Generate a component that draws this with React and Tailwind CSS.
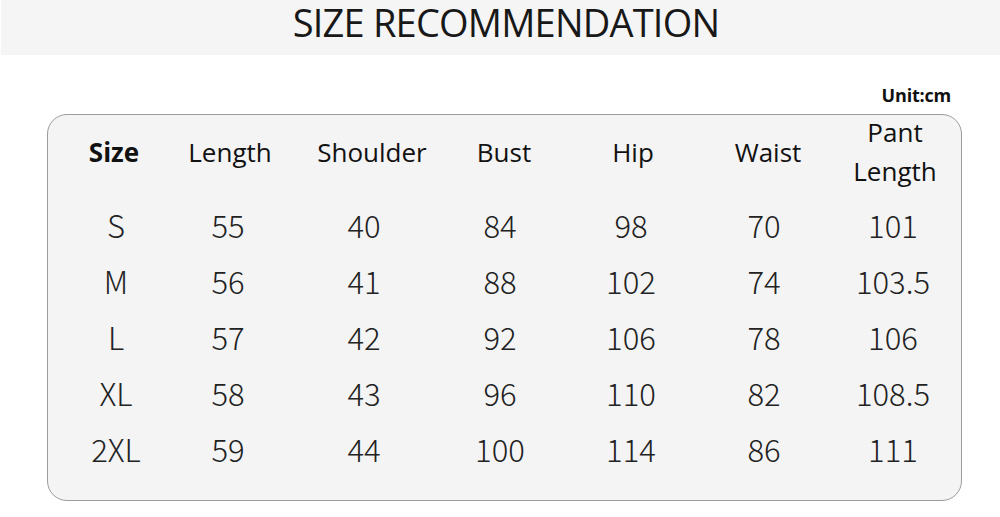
import React from "react";

const headers = ["Size", "Length", "Shoulder", "Bust", "Hip", "Waist", "Pant\nLength"];
const rows = [
  ["S", "55", "40", "84", "98", "70", "101"],
  ["M", "56", "41", "88", "102", "74", "103.5"],
  ["L", "57", "42", "92", "106", "78", "106"],
  ["XL", "58", "43", "96", "110", "82", "108.5"],
  ["2XL", "59", "44", "100", "114", "86", "111"],
];

export default function App() {
  return (
    <div className="w-[1000px] h-[517px] bg-white overflow-hidden">
      <div className="ml-px h-[55px] bg-[#f5f5f5] flex items-start justify-center pl-[11px]">
        <h1
          className="text-[38px] leading-[44px] text-[#181818] font-normal tracking-[-0.8px]"
          style={{ fontFamily: '"Open Sans", "Noto Sans", sans-serif' }}
        >
          SIZE RECOMMENDATION
        </h1>
      </div>
      <div className="h-[59px] flex items-end justify-end pr-[49px] pb-[10px]">
        <span
          className="text-[18px] font-bold leading-none text-[#111] tracking-[-0.2px]"
          style={{ fontFamily: '"Open Sans", "Noto Sans", sans-serif' }}
        >
          Unit:cm
        </span>
      </div>
      <div className="ml-[47px] w-[915px] h-[387px] rounded-[20px] border border-[#9c9c9c] bg-[#f4f4f4] pt-[9px]">
        <div
          className="grid grid-cols-[132px_100px_184px_80px_178px_92px_162px] grid-rows-[56px] items-center text-[26px] text-[#111]"
          style={{ fontFamily: '"Open Sans", "Noto Sans", sans-serif' }}
        >
          {headers.map((h, i) => (
            <div
              key={i}
              className={
                "text-center whitespace-pre-line leading-[39px] " + (i === 0 ? "font-bold" : "font-normal")
              }
            >
              {h}
            </div>
          ))}
        </div>
        <div className="mt-[16px]">
          {rows.map((r, ri) => (
            <div
              key={ri}
              className="grid grid-cols-[136px_88px_184px_88px_174px_92px_166px] h-[56px] items-center text-[31px] text-[#222] font-extralight"
              style={{ fontFamily: '"Noto Sans CJK SC", "Noto Sans", sans-serif' }}
            >
              {r.map((c, ci) => (
                <div key={ci} className="text-center leading-none">
                  {c}
                </div>
              ))}
            </div>
          ))}
        </div>
      </div>
    </div>
  );
}
